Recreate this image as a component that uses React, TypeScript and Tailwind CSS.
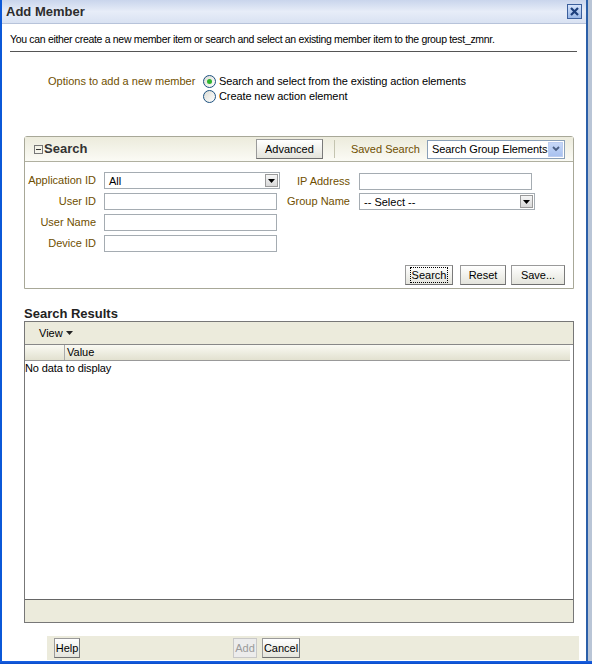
import React from "react";

const Btn = ({ children, className = "", disabled = false, focus = false }: { children: React.ReactNode; className?: string; disabled?: boolean; focus?: boolean }) => (
  <div
    className={`flex items-center justify-center border whitespace-nowrap ${disabled ? "border-[#c8c8c8] text-[#9a9a9a] bg-[#ececec]" : "border-[#9a9a9a] border-b-[#6f6f6f] border-r-[#7a7a7a] text-black bg-gradient-to-b from-white to-[#e4e4dc]"} h-[20px] text-[11px] ${className}`}
  >
    {focus ? <span className="border border-dotted border-black px-[1px] leading-[14px]">{children}</span> : children}
  </div>
);

const Input = ({ w }: { w: string }) => <div className={`h-[17px] border border-[#a5acb2] bg-white ${w}`} />;

const Select = ({ w, text }: { w: string; text: string }) => (
  <div className={`h-[17px] border border-[#a5acb2] bg-white flex items-center justify-between pl-[4px] pr-[1px] ${w}`}>
    <span className="text-[11px] leading-[14px] whitespace-nowrap">{text}</span>
    <span className="w-[13px] h-[13px] border border-[#9a9a9a] bg-gradient-to-b from-[#f6f6f6] to-[#d8d8d8] flex items-center justify-center">
      <svg width="7" height="4" viewBox="0 0 7 4"><path d="M0 0h7L3.5 4z" fill="#000" /></svg>
    </span>
  </div>
);

const Label = ({ children }: { children: React.ReactNode }) => (
  <div className="text-[11px] text-[#6f4f00] text-right leading-[17px] whitespace-nowrap">{children}</div>
);

export default function App() {
  return (
    <div className="w-[592px] h-[664px] flex bg-[#b9c5d6] font-['Liberation_Sans',Arial,sans-serif] text-black overflow-hidden relative">
      <div className="w-[588px] h-[661px] flex flex-col bg-white border-l-2 border-l-[#0b58d8] border-r-2 border-r-[#2b5fa8]">
        {/* title bar */}
        <div className="h-[24px] shrink-0 flex items-center justify-between pl-[4px] pr-[4px] bg-gradient-to-b from-[#c9d5ec] via-[#e7edf8] to-[#d9e2f2] border-b border-[#b7c3da]">
          <span className="text-[13px] font-bold text-[#2d2d2d]">Add Member</span>
          <span className="w-[15px] h-[15px] border border-[#3b5f9c] bg-gradient-to-b from-[#d6e4fb] to-[#98b6e6] flex items-center justify-center">
            <svg width="9" height="9" viewBox="0 0 9 9"><path d="M1 1L8 8M8 1L1 8" stroke="#1d3f7c" strokeWidth="2.2" /></svg>
          </span>
        </div>

        {/* intro */}
        <div className="mt-[8px] ml-[8px] w-[567px] border-b border-[#555] pb-[5px] text-[10.5px] leading-[14px] tracking-[-0.32px] whitespace-nowrap">
          You can either create a new member item or search and select an existing member item to the group test_zmnr.
        </div>

        {/* options */}
        <div className="mt-[22px] ml-[46px] flex">
          <div className="text-[11px] text-[#6f4f00] leading-[15px] w-[155px] whitespace-nowrap">Options to add a new member</div>
          <div className="flex flex-col">
            <div className="flex items-center h-[15px] gap-[3px]">
              <span className="w-[13px] h-[13px] rounded-full border border-[#1c5180] bg-gradient-to-br from-[#dcdcd4] to-white flex items-center justify-center">
                <span className="w-[5px] h-[5px] rounded-full bg-[#2fb42f]" />
              </span>
              <span className="text-[11px] leading-[15px] tracking-[-0.1px] whitespace-nowrap">Search and select from the existing action elements</span>
            </div>
            <div className="flex items-center h-[15px] gap-[3px]">
              <span className="w-[13px] h-[13px] rounded-full border border-[#1c5180] bg-gradient-to-br from-[#dcdcd4] to-white" />
              <span className="text-[11px] leading-[15px] tracking-[-0.1px] whitespace-nowrap">Create new action element</span>
            </div>
          </div>
        </div>

        {/* search panel */}
        <div className="mt-[32px] ml-[22px] w-[550px] h-[153px] shrink-0 border border-[#a8a898] rounded-t-[3px] flex flex-col">
          <div className="h-[25px] shrink-0 flex items-center bg-gradient-to-b from-[#ecebdc] to-[#fbfbf5] border-b border-[#b0b0a0] pl-[9px] pr-[8px]">
            <span className="w-[9px] h-[9px] border border-[#777] flex items-center justify-center mr-[1px]">
              <span className="w-[5px] h-[1px] bg-[#333]" />
            </span>
            <span className="text-[13px] font-bold text-[#333]">Search</span>
            <div className="flex-1" />
            <Btn className="w-[67px] h-[20px]">Advanced</Btn>
            <span className="w-[1px] h-[18px] bg-[#c4c4b0] ml-[11px] mr-[16px]" />
            <span className="text-[11px] text-[#6f4f00] whitespace-nowrap">Saved Search</span>
            <div className="ml-[7px] w-[138px] h-[19px] border border-[#8aa0b8] bg-white flex items-center justify-between pl-[4px] pr-[1px]">
              <span className="text-[11px] tracking-[-0.1px] whitespace-nowrap">Search Group Elements</span>
              <span className="w-[15px] h-[15px] bg-gradient-to-b from-[#c7d8f8] to-[#a9c2ef] border border-[#bccdf0] flex items-center justify-center">
                <svg width="8" height="6" viewBox="0 0 8 6"><path d="M1 1L4 4L7 1" stroke="#4a5f84" strokeWidth="1.8" fill="none" /></svg>
              </span>
            </div>
          </div>
          <div className="flex pt-[10px]">
            <div className="grid grid-cols-[71px_auto] gap-x-[8px] gap-y-[4px] items-center">
              <Label>Application ID</Label>
              <Select w="w-[176px]" text="All" />
              <Label>User ID</Label>
              <Input w="w-[173px]" />
              <Label>User Name</Label>
              <Input w="w-[173px]" />
              <Label>Device ID</Label>
              <Input w="w-[173px]" />
            </div>
            <div className="grid grid-cols-[70px_auto] gap-x-[9px] gap-y-[3px] items-center content-start pt-[1px]">
              <Label>IP Address</Label>
              <Input w="w-[173px]" />
              <Label>Group Name</Label>
              <Select w="w-[176px]" text="-- Select --" />
            </div>
          </div>
          <div className="flex-1" />
          <div className="flex justify-end pr-[8px] pb-[3px]">
            <Btn focus className="w-[48px]">Search</Btn>
            <Btn className="w-[46px] ml-[7px]">Reset</Btn>
            <Btn className="w-[54px] ml-[5px]">Save...</Btn>
          </div>
        </div>

        {/* search results */}
        <div className="mt-[17px] ml-[22px] text-[13px] font-bold text-[#222] leading-[15px]">Search Results</div>
        <div className="ml-[22px] w-[550px] h-[302px] shrink-0 border border-[#777] flex flex-col">
          <div className="h-[23px] shrink-0 bg-[#ecebdc] border-b border-[#888] flex items-center pl-[14px] text-[11px]">
            View
            <svg className="ml-[3px]" width="7" height="4" viewBox="0 0 7 4"><path d="M0 0h7L3.5 4z" fill="#222" /></svg>
          </div>
          <div className="h-[16px] shrink-0 mr-[3px] flex bg-gradient-to-b from-[#fafaf3] to-[#e2e1d0] border-b border-[#999]">
            <div className="w-[40px] border-r border-[#aaa]" />
            <div className="pl-[2px] text-[11px] leading-[15px]">Value</div>
          </div>
          <div className="text-[11px] leading-[14px] tracking-[-0.1px]">No data to display</div>
          <div className="flex-1" />
          <div className="h-[23px] shrink-0 bg-[#ecebdc] border-t border-[#666]" />
        </div>

        {/* bottom bar */}
        <div className="mt-[13px] ml-[45px] w-[532px] h-[24px] shrink-0 bg-[#ecebdc] flex items-center pl-[7px]">
          <Btn className="w-[26px]">Help</Btn>
          <Btn disabled className="w-[24px] ml-[153px]">Add</Btn>
          <Btn className="w-[38px] ml-[5px]">Cancel</Btn>
        </div>
      </div>
      <div className="absolute left-0 top-[661px] w-[592px] h-[3px] bg-gradient-to-b from-[#1a63e6] to-[#0a4bc8]" />
    </div>
  );
}
